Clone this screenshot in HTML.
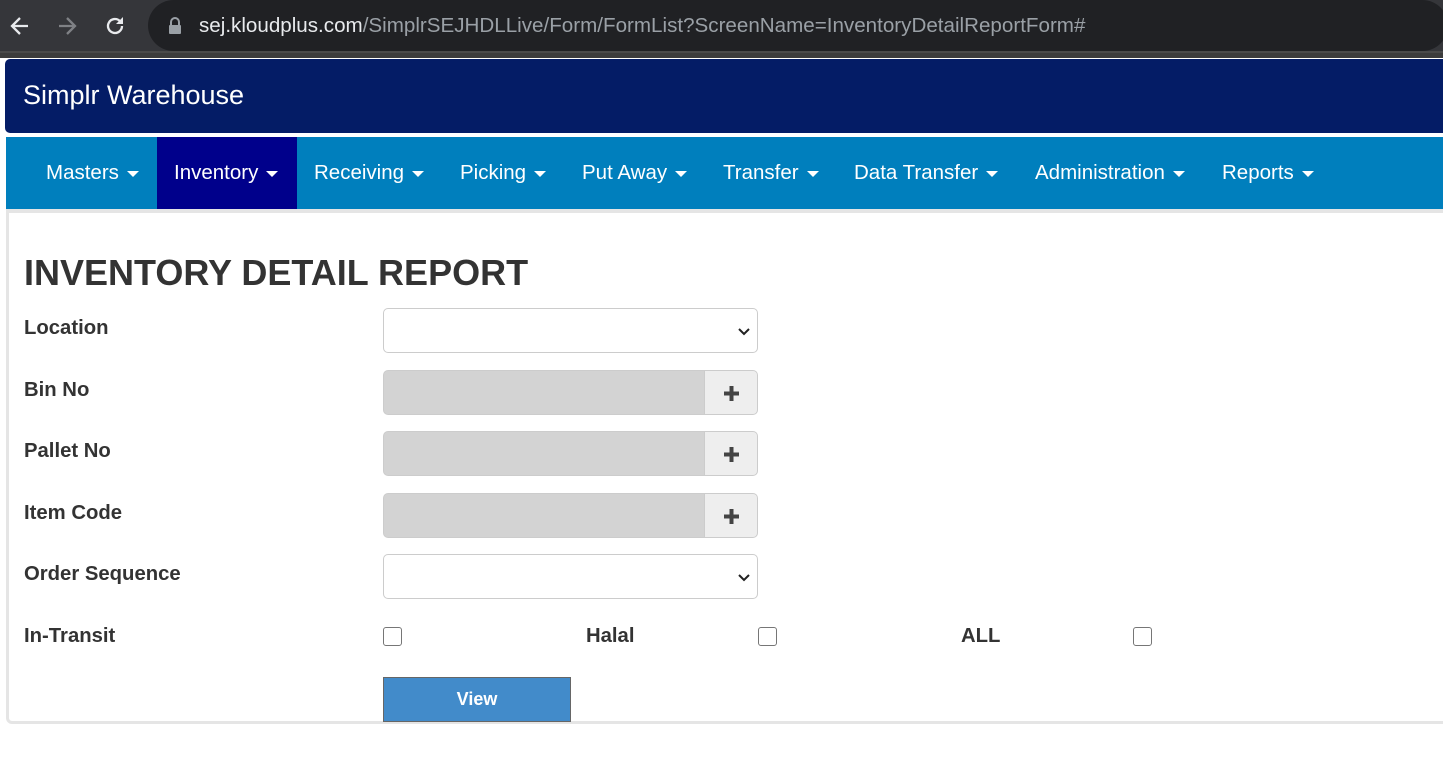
<!DOCTYPE html>
<html><head><meta charset="utf-8"><style>
*{margin:0;padding:0;box-sizing:border-box}
body{width:1443px;height:764px;background:#fff;font-family:"Liberation Sans",Arial,sans-serif;position:relative;overflow:hidden}
.abs{position:absolute}
.chrome{left:0;top:0;width:1443px;height:51px;background:#35363a}
.pill{left:148px;top:0;width:1300px;height:51px;background:#202124;border-radius:26px}
.url{left:199px;top:14px;font-size:20.6px;color:#9aa0a6;white-space:nowrap}
.url b{color:#e8eaed;font-weight:normal}
.hdr{left:5px;top:59px;width:1440px;height:74px;background:#041c66;border-radius:5px 0 0 5px}
.hdr span{position:absolute;left:18px;top:21px;color:#fff;font-size:27px}
.nav{left:6px;top:137px;width:1437px;height:72px;background:#007fbd}
.nav div{position:absolute;top:0;height:72px;line-height:72px;color:#fff;font-size:20.5px;white-space:nowrap}
.caret{display:inline-block;width:0;height:0;border-left:6px solid transparent;border-right:6px solid transparent;border-top:6px solid #fff;vertical-align:middle;margin-left:8px}
.panel{left:6px;top:209px;width:1445px;height:515px;border:3px solid #e5e5e5;border-top:4px solid #e5e5e5;border-radius:0 0 0 6px}
h1{position:absolute;left:24px;top:252px;font-size:36px;color:#333;font-weight:bold}
.lbl{position:absolute;left:24px;font-size:20.3px;font-weight:bold;color:#333}
.sel{position:absolute;left:383px;width:375px;height:45px;border:1px solid #ccc;border-radius:5px;background:#fff}
.sel svg{position:absolute;right:6px;top:15px}
.grp{position:absolute;left:383px;width:375px;height:45px;border:1px solid #ccc;border-radius:5px;background:#d3d3d3;overflow:hidden}
.grp .btn{position:absolute;right:0;top:0;width:53px;height:45px;background:#eee;border-left:1px solid #ccc}
.cb{position:absolute;width:19px;height:19px;border:1.5px solid #767676;border-radius:3px;top:627px}
.view{left:383px;top:677px;width:188px;height:45px;background:#428bca;border:1px solid #666;color:#fff;font-weight:bold;font-size:18px;text-align:center;line-height:43px}
</style></head><body>
<div class="abs chrome"></div>
<div class="abs pill"></div>
<svg class="abs" style="left:8px;top:14px" width="24" height="24" viewBox="0 0 24 24"><path d="M20 12H5M12 4l-8 8 8 8" stroke="#e8eaed" stroke-width="2.3" fill="none"/></svg>
<svg class="abs" style="left:55px;top:14px" width="24" height="24" viewBox="0 0 24 24"><path d="M4 12h15M12 4l8 8-8 8" stroke="#7f8185" stroke-width="2.3" fill="none"/></svg>
<svg class="abs" style="left:103px;top:14px" width="24" height="24" viewBox="0 0 24 24"><path d="M19 12a7 7 0 1 1-2.1-5" stroke="#e8eaed" stroke-width="2.3" fill="none"/><path d="M20 3v7h-7z" fill="#e8eaed"/></svg>
<svg class="abs" style="left:168px;top:17px" width="14" height="18" viewBox="0 0 14 18"><path d="M3 8V5a4 4 0 0 1 8 0v3" stroke="#9aa0a6" stroke-width="2" fill="none"/><rect x="1" y="8" width="12" height="9" rx="1" fill="#9aa0a6"/></svg>
<div class="abs url"><b>sej.kloudplus.com</b>/SimplrSEJHDLLive/Form/FormList?ScreenName=InventoryDetailReportForm#</div>
<div class="abs" style="left:0;top:51px;width:1443px;height:7px;background:#3c3c3c;border-top:2px solid #4a4a4a"></div>
<div class="abs hdr"><span>Simplr Warehouse</span></div>
<div class="abs nav">
<div style="left:40px">Masters<span class="caret"></span></div>
<div style="left:151px;width:140px;background:#00008b;padding-left:17px">Inventory<span class="caret"></span></div>
<div style="left:308px">Receiving<span class="caret"></span></div>
<div style="left:454px">Picking<span class="caret"></span></div>
<div style="left:576px">Put Away<span class="caret"></span></div>
<div style="left:717px">Transfer<span class="caret"></span></div>
<div style="left:848px">Data Transfer<span class="caret"></span></div>
<div style="left:1029px">Administration<span class="caret"></span></div>
<div style="left:1216px">Reports<span class="caret"></span></div>
</div>
<div class="abs panel"></div>
<h1>INVENTORY DETAIL REPORT</h1>
<div class="lbl" style="top:317px">Location</div>
<div class="sel" style="top:308px"><svg width="14" height="14" viewBox="0 0 14 14"><path d="M2 5l5 5 5-5" stroke="#222" stroke-width="2" fill="none"/></svg></div>
<div class="lbl" style="top:379px">Bin No</div>
<div class="grp" style="top:370px"><div class="btn"><svg style="position:absolute;left:18px;top:14px" width="17" height="17"><path d="M8.5 1v15M1 8.5h15" stroke="#444" stroke-width="4"/></svg></div></div>
<div class="lbl" style="top:440px">Pallet No</div>
<div class="grp" style="top:431px"><div class="btn"><svg style="position:absolute;left:18px;top:14px" width="17" height="17"><path d="M8.5 1v15M1 8.5h15" stroke="#444" stroke-width="4"/></svg></div></div>
<div class="lbl" style="top:502px">Item Code</div>
<div class="grp" style="top:493px"><div class="btn"><svg style="position:absolute;left:18px;top:14px" width="17" height="17"><path d="M8.5 1v15M1 8.5h15" stroke="#444" stroke-width="4"/></svg></div></div>
<div class="lbl" style="top:563px">Order Sequence</div>
<div class="sel" style="top:554px"><svg width="14" height="14" viewBox="0 0 14 14"><path d="M2 5l5 5 5-5" stroke="#222" stroke-width="2" fill="none"/></svg></div>
<div class="lbl" style="top:625px">In-Transit</div>
<div class="cb" style="left:383px"></div>
<div class="lbl" style="top:625px;left:586px">Halal</div>
<div class="cb" style="left:758px"></div>
<div class="lbl" style="top:625px;left:961px">ALL</div>
<div class="cb" style="left:1133px"></div>
<div class="abs view">View</div>
</body></html>
